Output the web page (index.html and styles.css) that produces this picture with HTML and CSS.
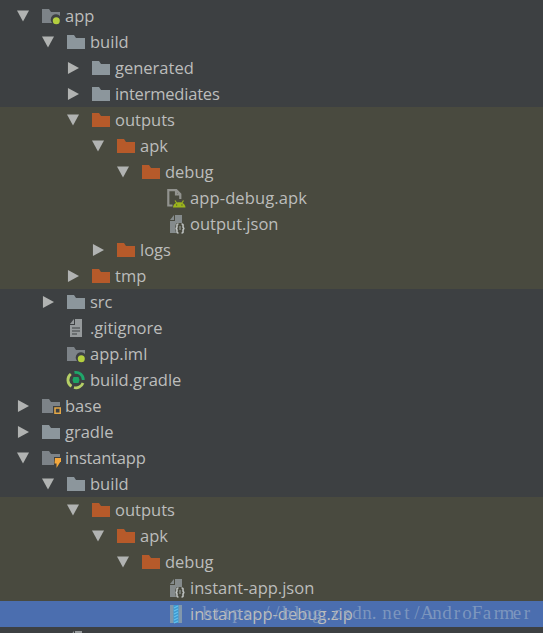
FILE: index.html
```
<!DOCTYPE html>
<html lang="en">
<head>
<meta charset="utf-8">
<title>Project</title>
<link rel="stylesheet" href="styles.css">
</head>
<body>
<svg class="defs" aria-hidden="true">
  <symbol id="folder" viewBox="0 0 20 20"><path d="M1 3h7l2 3h9v11H1z" fill="currentColor"/></symbol>
  <symbol id="module" viewBox="0 0 20 20"><path d="M1 3h7l2 3h9v4a5 5 0 0 0-8 7H1z" fill="#7d8388"/><circle cx="15.3" cy="14.7" r="3.5" fill="#b4cf3f"/></symbol>
  <symbol id="base" viewBox="0 0 20 20"><path d="M1 3h7l2 3h9v4h-7v7H1z" fill="#7d8388"/><path d="M14 12h5.300v5.300H14z" fill="none" stroke="#e2a646" stroke-width="1.600"/></symbol>
  <symbol id="instant" viewBox="0 0 20 20"><path d="M1 3h7l2 3h9v3h-6v8H1z" fill="#7d8388"/><path d="M14 10h6v4h-.8L15.500 20v-4.500H13.500z" fill="#f5a83c"/></symbol>
  <symbol id="apk" viewBox="0 0 20 20"><path d="M6.500 17.500H2.300V2.200h8l4 4V11M10 2v4.500h4" fill="none" stroke="#92938f" stroke-width="2.200"/><path d="M7 19.500c.4-7 12-7 12.500 0z" fill="#9cb51c"/><path d="M9 12.500l2 3M17.500 12.500l-2 3" stroke="#9cb51c" stroke-width="1.200"/><path d="M10 17h1.200M15.300 17h1.200" stroke="#494a3f" stroke-width="1.200"/></symbol>
  <symbol id="json" viewBox="0 0 20 20"><path d="M9 1h7v8h-5c-2 1-2 5-1 10H4V7h5z" fill="#858b8c"/><path d="M8 1v5H4z" fill="#858b8c"/><path d="M12.500 10c-2 0-1.500 1-1.500 2.500 0 1-.5 2-1.500 2 1 0 1.500 1 1.500 2 0 1.500-.5 2.500 1.500 2.500M15.500 10c2 0 1.500 1 1.500 2.500 0 1 .5 2 1.500 2-1 0-1.500 1-1.500 2 0 1.500.5 2.500-1.500 2.500" fill="none" stroke="#c4c8c7" stroke-width="1.500"/><path d="M14 12v4" stroke="#a4aaa9"/></symbol>
  <symbol id="text" viewBox="0 0 20 20"><path d="M9 1h7v18H4V7h5z" fill="#969a9c"/><path d="M8 1v5H4z" fill="#969a9c"/><path d="M6 10h8M6 13h8M6 16h5" stroke="#3d4042" stroke-width="1.200"/></symbol>
  <symbol id="gradle" viewBox="0 0 20 20"><g fill="none" stroke-width="2.800"><path d="M8.500 2.500A7.500 7.500 0 0 1 17.300 10" stroke="#1fa66a"/><path d="M4.800 4A7.500 7.500 0 0 0 5.500 16.300M8 17.500A7.500 7.500 0 0 0 17 13" stroke="#b5cf66"/></g><path d="M7.500 7h5l1 3-1 3h-5l-1-3z" fill="#1da464"/></symbol>
  <symbol id="zip" viewBox="0 0 20 20"><path d="M4 1h12v18H4z" fill="#8197ac"/><path d="M7.500 1h5v18h-5z" fill="#3d9bd3"/><path d="M8 4l4-2M8 7l4-2M8 10l4-2M8 13l4-2M8 16l4-2M8 19l4-2" stroke="#66c2ed" stroke-width="1.200"/></symbol>
</svg>
<ul class="tree">
  <li class="row l0"><i class="arrow open"></i><svg class="icon"><use href="#module"/></svg><span>app</span></li>
  <li class="row l1"><i class="arrow open"></i><svg class="icon"><use href="#folder"/></svg><span>build</span></li>
  <li class="row l2"><i class="arrow"></i><svg class="icon"><use href="#folder"/></svg><span>generated</span></li>
  <li class="row l2"><i class="arrow"></i><svg class="icon"><use href="#folder"/></svg><span class="tight">intermediates</span></li>
  <li class="row l2 excluded"><i class="arrow open"></i><svg class="icon"><use href="#folder"/></svg><span>outputs</span></li>
  <li class="row l3 excluded"><i class="arrow open"></i><svg class="icon"><use href="#folder"/></svg><span>apk</span></li>
  <li class="row l4 excluded"><i class="arrow open"></i><svg class="icon"><use href="#folder"/></svg><span>debug</span></li>
  <li class="row l5 excluded"><i class="arrow none"></i><svg class="icon"><use href="#apk"/></svg><span class="loose">app-debug.apk</span></li>
  <li class="row l5 excluded"><i class="arrow none"></i><svg class="icon"><use href="#json"/></svg><span>output.json</span></li>
  <li class="row l3 excluded"><i class="arrow"></i><svg class="icon"><use href="#folder"/></svg><span>logs</span></li>
  <li class="row l2 excluded"><i class="arrow"></i><svg class="icon"><use href="#folder"/></svg><span>tmp</span></li>
  <li class="row l1"><i class="arrow"></i><svg class="icon"><use href="#folder"/></svg><span>src</span></li>
  <li class="row l1"><i class="arrow none"></i><svg class="icon"><use href="#text"/></svg><span>.gitignore</span></li>
  <li class="row l1"><i class="arrow none"></i><svg class="icon"><use href="#module"/></svg><span>app.iml</span></li>
  <li class="row l1"><i class="arrow none"></i><svg class="icon"><use href="#gradle"/></svg><span>build.gradle</span></li>
  <li class="row l0"><i class="arrow"></i><svg class="icon"><use href="#base"/></svg><span>base</span></li>
  <li class="row l0"><i class="arrow"></i><svg class="icon"><use href="#folder"/></svg><span>gradle</span></li>
  <li class="row l0"><i class="arrow open"></i><svg class="icon"><use href="#instant"/></svg><span class="tight">instantapp</span></li>
  <li class="row l1"><i class="arrow open"></i><svg class="icon"><use href="#folder"/></svg><span>build</span></li>
  <li class="row l2 excluded"><i class="arrow open"></i><svg class="icon"><use href="#folder"/></svg><span>outputs</span></li>
  <li class="row l3 excluded"><i class="arrow open"></i><svg class="icon"><use href="#folder"/></svg><span>apk</span></li>
  <li class="row l4 excluded"><i class="arrow open"></i><svg class="icon"><use href="#folder"/></svg><span>debug</span></li>
  <li class="row l5 excluded"><i class="arrow none"></i><svg class="icon"><use href="#json"/></svg><span>instant-app.json</span></li>
  <li class="row l5 selected"><i class="arrow none"></i><svg class="icon"><use href="#zip"/></svg><span>instantapp-debug.zip</span></li>
  <li class="row l1"><i class="arrow none"></i><svg class="icon"><use href="#text"/></svg></li>
</ul>
<svg class="watermark" viewBox="0 0 543 26"><text y="18" x="207 217 227 237 247 256 267 277 287 297 307 317 324 337 347 357 367 374 387 397 407 417 427 437 447 457 467 477 487 497 507 517 527">https://blog.csdn.net/AndroFarmer</text></svg>
</body>
</html>
```
FILE: styles.css
```
body {
  margin: 0;
  height: 633px;
  overflow: hidden;
  position: relative;
  background: #3d4042;
  color: #bcbdbc;
  font: 16.5px/26px "Open Sans", "Noto Sans", sans-serif;
}
.defs { position: absolute; width: 0; height: 0; }
.tree { list-style: none; margin: 0; padding: 3px 0 0; }
.row {
  display: flex;
  align-items: center;
  height: 26px;
  padding-left: 17px;
  white-space: nowrap;
  box-sizing: border-box;
}
.l1 { padding-left: 42px; }
.l2 { padding-left: 67px; }
.l3 { padding-left: 92px; }
.l4 { padding-left: 117px; }
.l5 { padding-left: 142px; }
.tight { letter-spacing: -.2px; }
.loose { letter-spacing: .12px; }
.excluded { background: #494a3f; }
.selected { background: #4b6eaf; }
.arrow {
  width: 12px;
  height: 12px;
  margin-right: 12px;
  background: #b1b3b2;
  clip-path: polygon(8% 0, 100% 50%, 8% 100%);
}
.arrow.open { clip-path: polygon(0 4%, 100% 4%, 50% 96%); }
.arrow.none { visibility: hidden; }
.icon { width: 20px; height: 20px; margin-right: 4px; color: #8c969c; flex: none; }
.excluded .icon { color: #b65a2a; }
.watermark {
  position: absolute;
  left: 0;
  top: 601px;
  width: 543px;
  height: 26px;
  font: 19px "Liberation Serif", serif;
  fill: #8ea4c4;
  fill-opacity: .75;
  text-anchor: middle;
}
```
